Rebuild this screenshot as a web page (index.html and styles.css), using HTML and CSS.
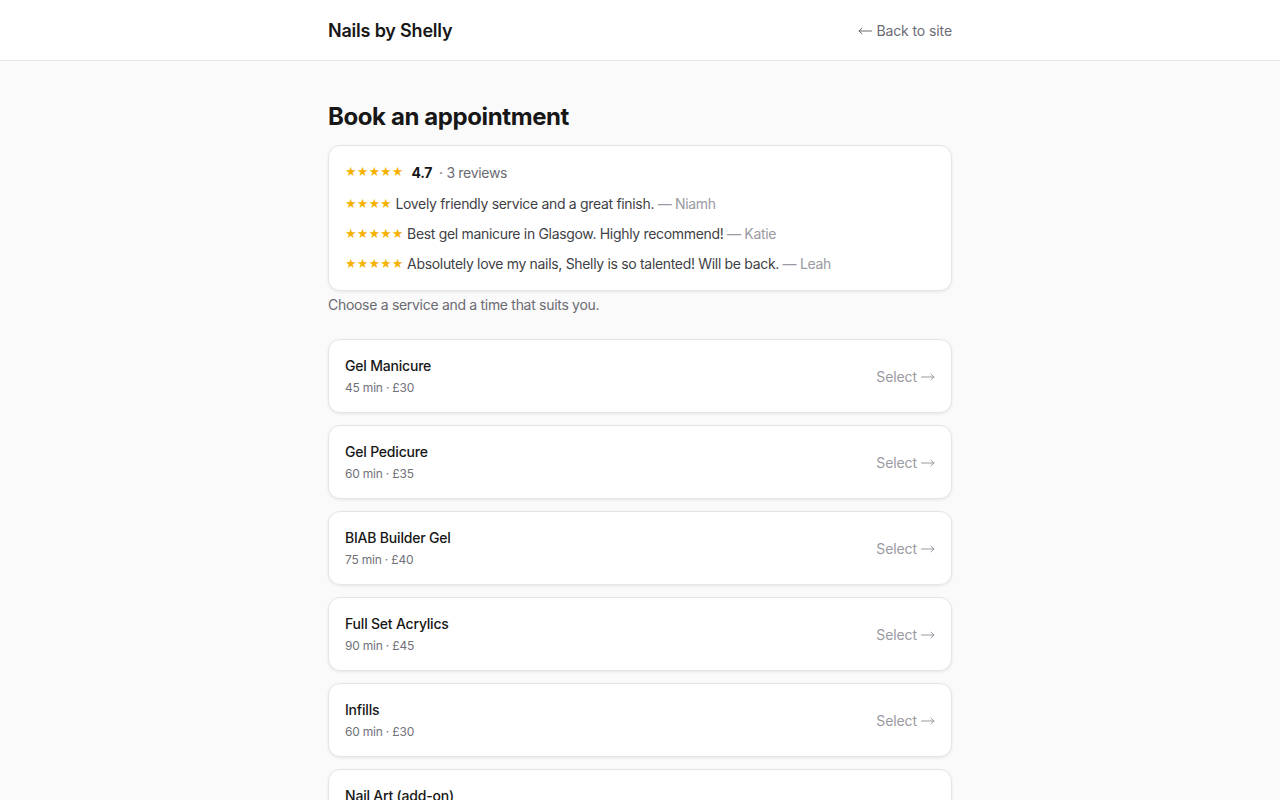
FILE: index.html
```html
<!DOCTYPE html>
<html lang="en">
<head>
<meta charset="utf-8">
<title>Nails by Shelly — Book</title>
<link rel="stylesheet" href="styles.css">
</head>
<body>
<header class="topbar">
  <div class="topbar-inner">
    <div class="brand">Nails by Shelly</div>
    <a class="back" href="#"><svg class="arrow" width="14" height="8" viewBox="0 0 14 8" aria-hidden="true"><path d="M13.5 4H1M4 1.2L1 4l3 2.8" fill="none" stroke="currentColor" stroke-width="1" stroke-linecap="round" stroke-linejoin="round"/></svg>Back to site</a>
  </div>
</header>
<main class="page">
  <h1 class="title">Book an appointment</h1>
  <section class="card reviews">
    <div class="summary"><span class="stars">★★★★★</span><span class="score">4.7</span><span class="count">· 3 reviews</span></div>
    <p class="review"><span class="stars">★★★★</span> Lovely friendly service and a great finish. <span class="author">— Niamh</span></p>
    <p class="review"><span class="stars">★★★★★</span> Best gel manicure in Glasgow. Highly recommend! <span class="author">— Katie</span></p>
    <p class="review"><span class="stars">★★★★★</span> Absolutely love my nails, Shelly is so talented! Will be back. <span class="author">— Leah</span></p>
  </section>
  <p class="intro">Choose a service and a time that suits you.</p>
  <ul class="services">
    <li class="card service"><div><div class="name">Gel Manicure</div><div class="meta">45 min · £30</div></div><span class="select">Select<svg class="arrow" width="14" height="8" viewBox="0 0 14 8" aria-hidden="true"><path d="M0.5 4H13M10 1.2L13 4l-3 2.8" fill="none" stroke="currentColor" stroke-width="1" stroke-linecap="round" stroke-linejoin="round"/></svg></span></li>
    <li class="card service"><div><div class="name">Gel Pedicure</div><div class="meta">60 min · £35</div></div><span class="select">Select<svg class="arrow" width="14" height="8" viewBox="0 0 14 8" aria-hidden="true"><path d="M0.5 4H13M10 1.2L13 4l-3 2.8" fill="none" stroke="currentColor" stroke-width="1" stroke-linecap="round" stroke-linejoin="round"/></svg></span></li>
    <li class="card service"><div><div class="name">BIAB Builder Gel</div><div class="meta">75 min · £40</div></div><span class="select">Select<svg class="arrow" width="14" height="8" viewBox="0 0 14 8" aria-hidden="true"><path d="M0.5 4H13M10 1.2L13 4l-3 2.8" fill="none" stroke="currentColor" stroke-width="1" stroke-linecap="round" stroke-linejoin="round"/></svg></span></li>
    <li class="card service"><div><div class="name">Full Set Acrylics</div><div class="meta">90 min · £45</div></div><span class="select">Select<svg class="arrow" width="14" height="8" viewBox="0 0 14 8" aria-hidden="true"><path d="M0.5 4H13M10 1.2L13 4l-3 2.8" fill="none" stroke="currentColor" stroke-width="1" stroke-linecap="round" stroke-linejoin="round"/></svg></span></li>
    <li class="card service"><div><div class="name">Infills</div><div class="meta">60 min · £30</div></div><span class="select">Select<svg class="arrow" width="14" height="8" viewBox="0 0 14 8" aria-hidden="true"><path d="M0.5 4H13M10 1.2L13 4l-3 2.8" fill="none" stroke="currentColor" stroke-width="1" stroke-linecap="round" stroke-linejoin="round"/></svg></span></li>
    <li class="card service"><div><div class="name">Nail Art (add-on)</div><div class="meta">15 min · £10</div></div><span class="select">Select<svg class="arrow" width="14" height="8" viewBox="0 0 14 8" aria-hidden="true"><path d="M0.5 4H13M10 1.2L13 4l-3 2.8" fill="none" stroke="currentColor" stroke-width="1" stroke-linecap="round" stroke-linejoin="round"/></svg></span></li>
  </ul>
</main>
</body>
</html>
```

FILE: styles.css
```css
* { box-sizing: border-box; }
html, body { margin: 0; padding: 0; }
body {
  background: #fafafa;
  color: #171717;
  font-family: Inter, "Noto Sans", sans-serif;
  -webkit-font-smoothing: antialiased;
}
.topbar {
  background: #fff;
  border-bottom: 1px solid #e5e5e5;
  height: 61px;
}
.topbar-inner {
  width: 624px;
  margin: 0 auto;
  height: 60px;
  display: flex;
  align-items: center;
  justify-content: space-between;
}
.brand { font-size: 18px; font-weight: 600; letter-spacing: -0.2px; }
.back {
  display: flex;
  align-items: center;
  gap: 4px;
  font-size: 14px;
  color: #6b6b73;
  text-decoration: none;
  letter-spacing: -0.1px;
}
.arrow { display: block; margin-top: 2px; }
.page {
  width: 624px;
  margin: 0 auto;
  padding-top: 40px;
}
.title {
  margin: 0 0 12px;
  font-size: 24px;
  font-weight: 700;
  letter-spacing: -0.4px;
  line-height: 32px;
}
.card {
  background: #fff;
  border: 1px solid #e5e5e5;
  border-radius: 12px;
  box-shadow: 0 1px 3px rgba(0,0,0,0.08);
}
.reviews { padding: 15px 16px 15px; }
.summary { display: flex; align-items: center; font-size: 14px; height: 22px; margin-bottom: 10px; letter-spacing: -0.3px; }
.stars { color: #f5b000; font-size: 11.2px; letter-spacing: 0; line-height: 1; vertical-align: 1px; }
.summary .stars { margin-top: 2px; }
.summary .score { font-weight: 700; margin-left: 8px; }
.summary .count { color: #6b6b73; margin-left: 7px; }
.review { margin: 0; font-size: 14px; line-height: 22px; height: 22px; color: #3f3f46; letter-spacing: -0.32px; }
.review + .review { margin-top: 8px; }
.review .author { color: #9a9aa2; }
.intro { margin: 6px 0 0; font-size: 14px; color: #6b6b73; line-height: 16px; letter-spacing: -0.3px; }
.services { list-style: none; margin: 26px 0 0; padding: 0; display: flex; flex-direction: column; gap: 12px; }
.service {
  display: flex;
  align-items: center;
  justify-content: space-between;
  height: 74px;
  padding: 0 16px;
}
.name { font-size: 14px; font-weight: 500; line-height: 20px; letter-spacing: -0.2px; }
.meta { font-size: 12px; color: #71717a; margin-top: 3px; line-height: 18px; letter-spacing: -0.2px; }
.select {
  display: flex;
  align-items: center;
  gap: 4px;
  font-size: 14px;
  color: #9a9aa2;
  letter-spacing: -0.1px;
}
```
